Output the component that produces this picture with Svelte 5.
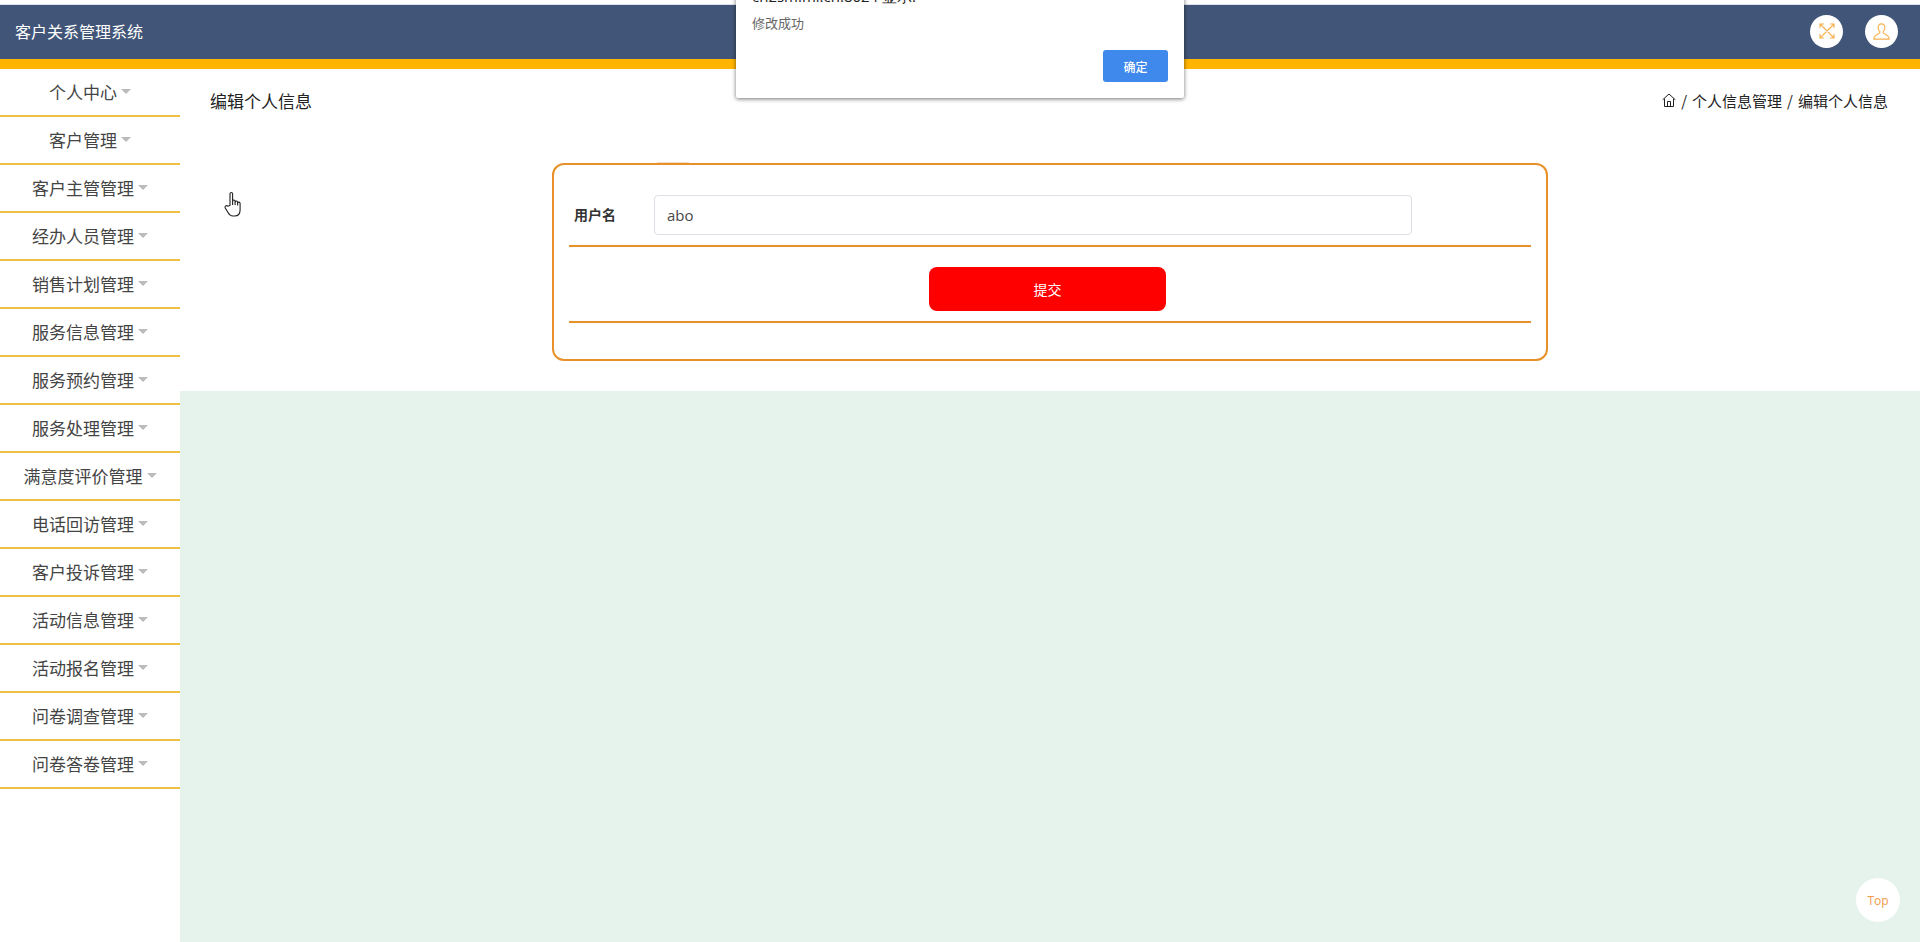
<script>
  const menu = ['个人中心','客户管理','客户主管管理','经办人员管理','销售计划管理','服务信息管理','服务预约管理','服务处理管理','满意度评价管理','电话回访管理','客户投诉管理','活动信息管理','活动报名管理','问卷调查管理','问卷答卷管理'];
</script>

<div class="page">
  <div class="strip"></div>
  <header class="topbar">
    <div class="brand">客户关系管理系统</div>
    <div class="tools">
      <span class="round">
        <svg width="16" height="16" viewBox="0 0 16 16" fill="none" stroke="#f6b04c" stroke-width="1.1">
          <path d="M1 5V1h4M1 1l14 14M15 11v4h-4M11 1h4v4M15 1L1 15M1 11v4h4"/>
        </svg>
      </span>
      <span class="round">
        <svg width="17" height="17" viewBox="0 0 20 20" fill="none" stroke="#f6b04c" stroke-width="1.3">
          <path d="M10 1c-2.600 0-4 2-4 4.200 0 2 .9 3.600 2 4.600v1.400c0 .8-.7 1.200-2 1.800-1.800.8-4 1.500-5 4.500v1.500h18v-1.500c-1-3-3.200-3.700-5-4.500-1.300-.6-2-1-2-1.800V9.800c1.100-1 2-2.600 2-4.600C14 3 12.600 1 10 1z"/>
        </svg>
      </span>
    </div>
  </header>
  <div class="accent"></div>
  <div class="body">
    <nav class="side">
      {#each menu as m}
        <div class="item"><span>{m}</span><i class="caret"></i></div>
      {/each}
    </nav>
    <main class="content">
      <section class="panel">
        <div class="crumbs">
          <h1>编辑个人信息</h1>
          <div class="path">
            <svg width="14" height="14" viewBox="0 0 14 14" fill="none" stroke="#222" stroke-width="1">
              <path d="M.6 6.800 7 1l6.400 5.800M2.500 5.500v8h9v-8M5.500 13.500V8.500h3v5"/>
            </svg>
            <span>/</span><span>个人信息管理</span><span>/</span><span>编辑个人信息</span>
          </div>
        </div>
        <form class="card">
          <div class="row">
            <label for="u">用户名</label>
            <input id="u" value="abo" />
          </div>
          <div class="row actions">
            <button type="button" class="submit">提交</button>
          </div>
        </form>
      </section>
    </main>
  </div>
  <div class="dialog">
    <div class="origin">ch2sm.ml.cn:8024 显示:</div>
    <div class="msg">修改成功</div>
    <div class="dlg-foot"><button type="button" class="ok">确定</button></div>
  </div>
  <div class="top">Top</div>
  <svg class="hand" width="20" height="26" viewBox="0 0 20 26" fill="#fff" stroke="#222" stroke-width="1.1" stroke-linejoin="round" aria-hidden="true">
    <path d="M6 14.500V2.800c0-1.800 2.600-1.800 2.600 0V10c0-1.300 2.500-1.300 2.500 0v1c0-1.300 2.500-1.300 2.500 0v1c0-1.200 2.500-1.200 2.500 0.500V19c0 3.500-2 6-5.500 6H9c-2.500 0-3.800-1.300-5-3.500L1.300 17c-1-1.800 1.200-3 2.500-1.800z"/>
    <path d="M8.600 10v4M11.100 11v3M13.600 12v2.500" fill="none"/>
  </svg>
</div>

<style>
  :global(body) { margin: 0; background: #fff; overflow: hidden; }
  .page { height: 942px; display: flex; flex-direction: column; position: relative; overflow: hidden;
    font-family: "Noto Sans CJK SC", "Open Sans", sans-serif; color: #333; }
  .strip { height: 4px; background: #fff; border-bottom: 1px solid #dfe1ec; flex: none; }
  .topbar { height: 54px; background: #415578; display: flex; align-items: center; justify-content: space-between; padding: 0 22px 2px 15px; box-sizing: border-box; flex: none; }
  .brand { color: #fff; font-size: 16px; }
  .tools { display: flex; gap: 22px; }
  .round { width: 33px; height: 33px; border-radius: 50%; background: #fff; display: flex; align-items: center; justify-content: center; }
  .accent { height: 10px; background: #ffb400; flex: none; }
  .body { flex: 1; display: flex; min-height: 0; }
  .side { width: 180px; flex: none; background: #fff; }
  .item { height: 46px; border-bottom: 2px solid #eec044; display: flex; align-items: center; justify-content: center; font-size: 17px; color: #444; gap: 4px; line-height: 1; }
  .item span { margin-top: -2px; }
  .caret { width: 0; height: 0; border: 5px solid transparent; border-top-color: #bbb; border-bottom: 0; margin-top: -2px; }
  .content { flex: 1; background: #e6f2ec; }
  .panel { background: #fff; height: 322px; padding: 0 32px 0 30px; box-sizing: border-box; }
  .crumbs { display: flex; align-items: center; justify-content: space-between; height: 62px; }
  h1 { font-size: 17px; font-weight: 400; color: #222; margin: 0; }
  .path { display: flex; align-items: center; font-size: 15px; color: #222; gap: 5px; }
  .card { width: 996px; height: 198px; box-sizing: border-box; margin: 32px 0 0 342px; border: 2px solid #e8912a; border-radius: 12px; padding: 30px 15px 0; position: relative; }
  .card::before { content: ""; position: absolute; left: 103px; top: -3px; width: 32px; height: 1px; background: #f5dcc0; }
  .row { display: flex; align-items: center; border-bottom: 2px solid #e8912a; padding-bottom: 10px; padding-left: 5px; height: 40px; }
  label { width: 80px; font-size: 14px; font-weight: 700; color: #333; margin-top: -2px; }
  input { width: 758px; height: 40px; box-sizing: border-box; border: 1px solid #dcdfe6; border-radius: 4px; padding: 0 12px; font-size: 15px; color: #484848; font-family: "Open Sans", sans-serif; outline: none; }
  .actions { justify-content: center; align-items: flex-start; height: 54px; padding: 20px 0 0; }
  .submit { width: 237px; height: 44px; background: #f00; color: #fff; border: 0; border-radius: 8px; font-size: 14px; font-family: inherit; margin-right: 5px; }
  .dialog { position: absolute; left: 736px; top: -30px; width: 448px; height: 128px; background: #fff; border-radius: 2px; box-shadow: 0 1px 4px rgba(0,0,0,.55); box-sizing: border-box; padding: 16px; }
  .origin { font-size: 15px; color: #222; height: 20px; line-height: 20px; font-family: "Open Sans", sans-serif; }
  .msg { font-size: 13px; color: #666; margin-top: 7px; }
  .dlg-foot { display: flex; justify-content: flex-end; margin-top: 18px; }
  .ok { width: 65px; height: 32px; background: #3f89ec; color: #fff; border: 0; border-radius: 3px; font-size: 12px; font-weight: 500; font-family: inherit; }
  .top { position: absolute; right: 20px; bottom: 20px; width: 44px; height: 44px; border-radius: 50%; background: #fff; color: #f09a4a; font-size: 12px; display: flex; align-items: center; justify-content: center; font-family: "Open Sans", sans-serif; }
  .hand { position: absolute; left: 224px; top: 191px; }
</style>
